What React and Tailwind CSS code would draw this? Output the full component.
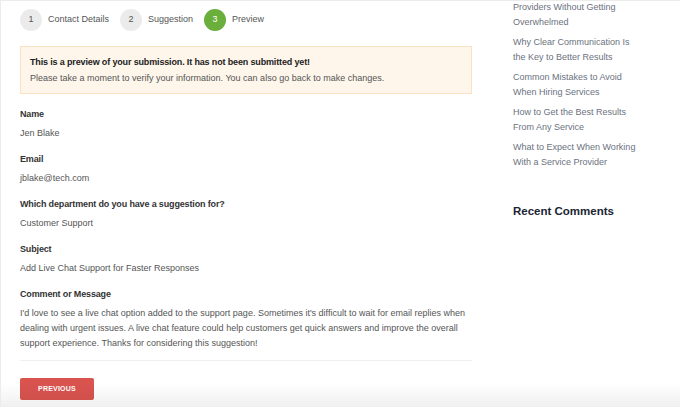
const steps = [
  { n: 1, label: "Contact Details" },
  { n: 2, label: "Suggestion" },
  { n: 3, label: "Preview", active: true },
];

const fields = [
  { label: "Name", value: "Jen Blake" },
  { label: "Email", value: "jblake@tech.com" },
  { label: "Which department do you have a suggestion for?", value: "Customer Support" },
  { label: "Subject", value: "Add Live Chat Support for Faster Responses" },
];

const posts = [
  ["Providers Without Getting", "Overwhelmed"],
  ["Why Clear Communication Is", "the Key to Better Results"],
  ["Common Mistakes to Avoid", "When Hiring Services"],
  ["How to Get the Best Results", "From Any Service"],
  ["What to Expect When Working", "With a Service Provider"],
];

const App = () => {
  return (
    <div className="relative w-[680px] h-[407px] overflow-hidden bg-white border-t border-l border-[#ececec] font-['Liberation_Sans',Arial,sans-serif]">
      <div className="flex">
        <div className="w-[452px] ml-[19px] shrink-0">
          <div className="flex items-center h-[40px] mt-[-1px]">
            {steps.map((s) => (
              <div key={s.n} className="flex items-center mr-[11px]">
                <div
                  className={
                    s.active
                      ? "w-[22px] h-[22px] rounded-full bg-[#6aae3b] text-white text-[9px] flex items-center justify-center"
                      : "w-[22px] h-[22px] rounded-full bg-[#ebebeb] text-[#555] text-[9px] flex items-center justify-center"
                  }
                >
                  {s.n}
                </div>
                <span className="ml-[6px] text-[9px] text-[#555]">{s.label}</span>
              </div>
            ))}
          </div>

          <div className="mt-[6px] h-[48px] bg-[#fef6eb] border border-[#fbe2c2] px-[9px] pt-[8px]">
            <p className="text-[9px] leading-[15px] font-bold tracking-[-0.15px] text-[#222]">
              This is a preview of your submission. It has not been submitted yet!
            </p>
            <p className="text-[9px] leading-[15px] text-[#555] mt-[1px]">
              Please take a moment to verify your information. You can also go back to make changes.
            </p>
          </div>

          <div className="mt-[13px]">
            {fields.map((f) => (
              <div key={f.label} className="mb-[11px]">
                <div className="text-[9px] leading-[15px] font-bold tracking-[-0.15px] text-[#333]">{f.label}</div>
                <div className="text-[9px] leading-[15px] text-[#555] mt-[4px]">{f.value}</div>
              </div>
            ))}
            <div className="text-[9px] leading-[15px] font-bold tracking-[-0.15px] text-[#333]">Comment or Message</div>
            <p className="text-[9px] leading-[15px] text-[#555] mt-[4px]">
              I'd love to see a live chat option added to the support page. Sometimes it's difficult to wait for email replies when dealing with urgent issues. A live chat feature could help customers get quick answers and improve the overall support experience. Thanks for considering this suggestion!
            </p>
            <hr className="mt-[9px] border-[#f0f0f0]" />
            <button className="mt-[17px] w-[74px] h-[22px] rounded-[2px] bg-[#d9534f] text-white text-[7px] font-bold tracking-[0.2px]">
              PREVIOUS
            </button>
          </div>
        </div>

        <div className="ml-[41px] w-[150px] shrink-0">
          <div className="mt-[-1px]">
            {posts.map((p, i) => (
              <div key={i} className="text-[9px] leading-[15px] text-[#6b7280] mb-[5px]">
                <div>{p[0]}</div>
                <div>{p[1]}</div>
              </div>
            ))}
          </div>
          <h3 className="mt-[33px] text-[11.5px] font-bold text-[#1b2433]">Recent Comments</h3>
        </div>
      </div>
      <div className="absolute left-0 right-0 bottom-0 h-[24px] bg-gradient-to-b from-transparent to-[#000]/[0.06] pointer-events-none" />
    </div>
  );
};

export default App;
